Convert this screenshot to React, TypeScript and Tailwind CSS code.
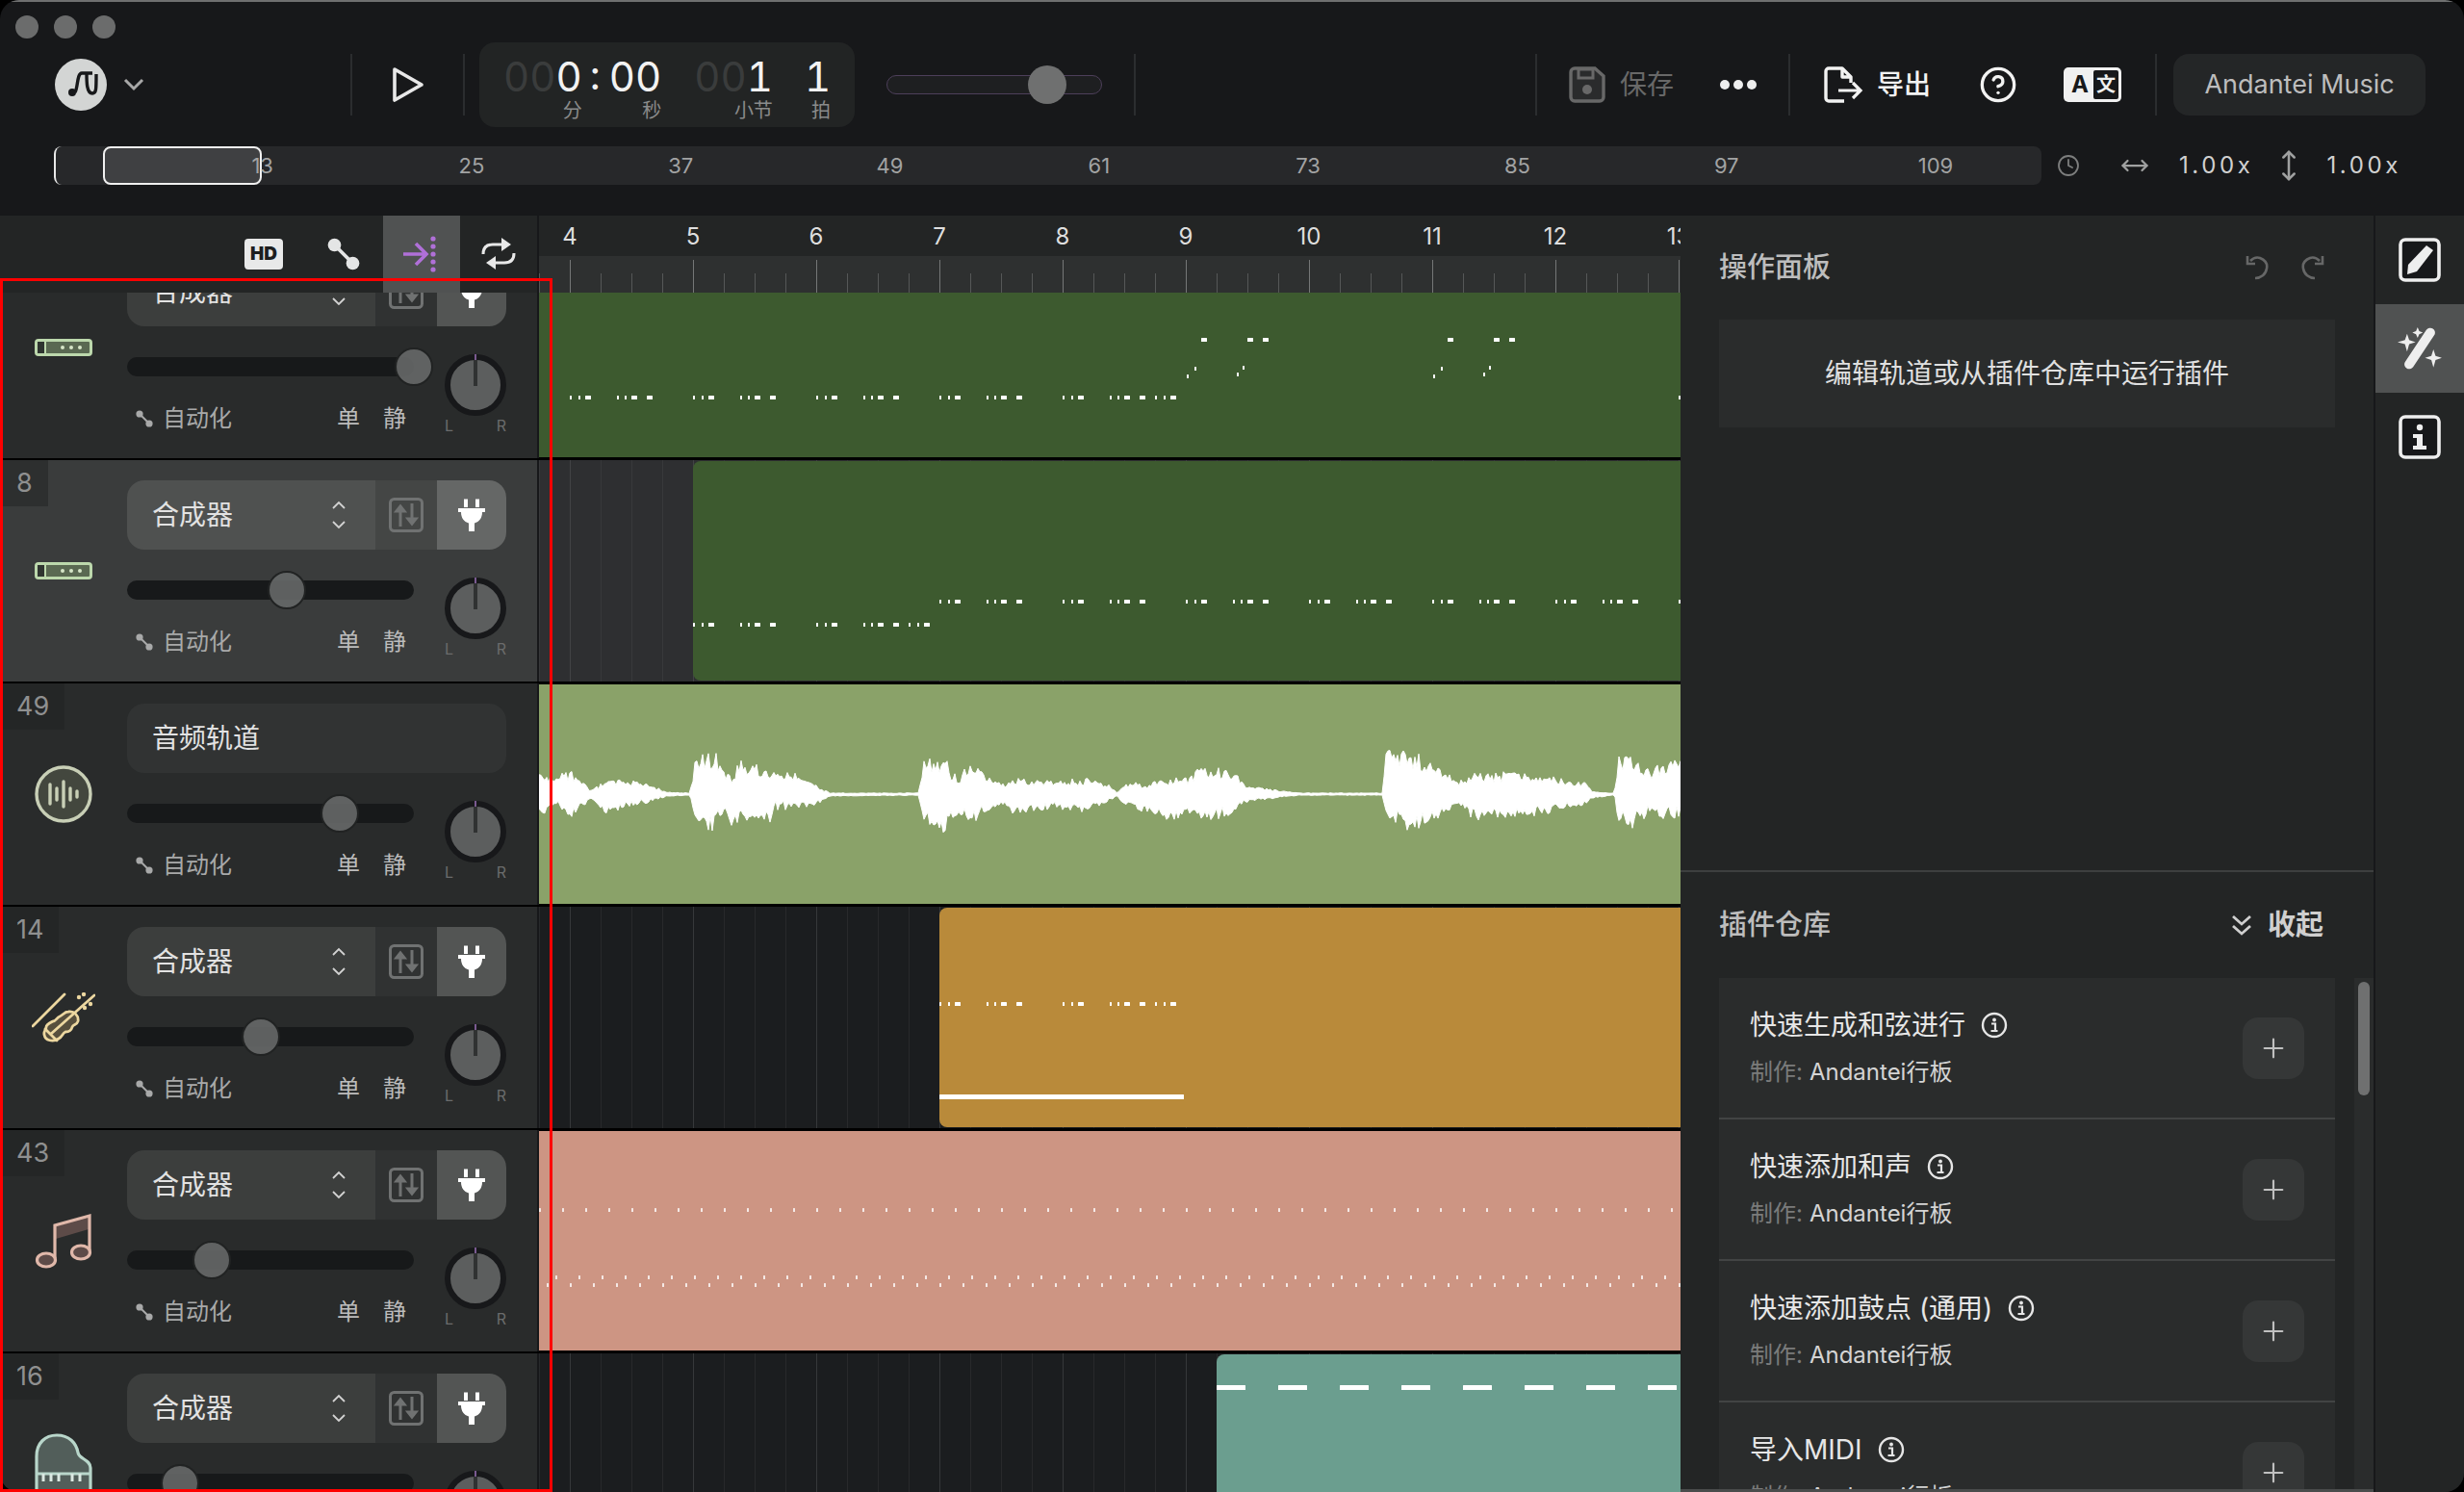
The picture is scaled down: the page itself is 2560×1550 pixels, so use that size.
import { CircleHelp, Clock, MoveHorizontal, MoveVertical, Plus } from "lucide-react";

type Rect = { x: number; y: number; w: number; h?: number };

// one bar of the repeating midi figure, x and y in timeline px
const bar = (x: number, y: number, extra = false): Rect[] => {
  const parts = [[0, 2], [9, 2], [16, 6], [49, 2], [57, 2], [64, 6], [80, 6]];
  if (extra) parts.push([96, 2], [105, 2], [112, 6]);
  return parts.map(([dx, w]) => ({ x: x + dx, y, w }));
};

const range = (n: number) => Array.from({ length: n }, (_, i) => i);

const TRACK7_NOTES: Rect[] = [
  ...bar(592, 411), ...bar(720, 411), ...bar(848, 411), ...bar(976, 411), ...bar(1104, 411, true),
  { x: 1233, y: 389, w: 2 }, { x: 1241, y: 381, w: 2 }, { x: 1248, y: 351, w: 6 },
  { x: 1285, y: 387, w: 2 }, { x: 1291, y: 380, w: 2 }, { x: 1296, y: 351, w: 6 }, { x: 1312, y: 351, w: 6 },
  { x: 1489, y: 389, w: 2 }, { x: 1497, y: 381, w: 2 }, { x: 1504, y: 351, w: 6 },
  { x: 1541, y: 387, w: 2 }, { x: 1547, y: 380, w: 2 }, { x: 1552, y: 351, w: 6 }, { x: 1568, y: 351, w: 6 },
  { x: 1744, y: 411, w: 2 },
];

const TRACK8_NOTES: Rect[] = [
  ...bar(720, 647), ...bar(848, 647, true),
  ...[976, 1104, 1232, 1360, 1488, 1616, 1744].flatMap((x) => bar(x, 623)),
];

const TRACK14_NOTES: Rect[] = [
  ...bar(976, 1041), ...bar(1104, 1041, true),
  { x: 976, y: 1137, w: 254, h: 5 },
];

const TRACK43_NOTES: Rect[] = range(50).flatMap((i) => [
  { x: 560 + i * 24, y: 1255, w: 2 },
  { x: 577 + i * 24, y: 1325, w: 2 },
  { x: 568 + i * 24, y: 1333, w: 2 },
]);

const TRACK16_NOTES: Rect[] = range(8).map((i) => ({ x: 1264 + i * 64, y: 1439, w: 30, h: 5 }));

// waveform envelope, read off the picture: x, top, bottom
const ENVELOPE = [
  [0, 330, 430], [20, 325, 405], [45, 315, 430], [70, 365, 390], [90, 345, 430], [120, 338, 405], [150, 352, 395],
  [175, 370, 380], [205, 372, 378], [212, 290, 435], [235, 262, 475], [250, 300, 420], [262, 340, 460], [272, 280, 445],
  [315, 320, 445], [320, 310, 410], [345, 320, 410], [375, 350, 405], [395, 372, 380], [515, 372, 378], [522, 290, 440],
  [550, 285, 475], [570, 340, 420], [585, 290, 450], [610, 325, 415], [630, 350, 400], [645, 330, 425], [700, 345, 410],
  [740, 335, 420], [775, 350, 390], [785, 372, 380], [795, 350, 405], [830, 345, 425], [860, 330, 445], [880, 335, 420],
  [900, 300, 440], [940, 315, 430], [960, 350, 395], [1000, 365, 385], [1030, 372, 378], [1145, 372, 378], [1150, 262, 445],
  [1185, 265, 465], [1210, 295, 440], [1250, 340, 405], [1270, 322, 440], [1340, 320, 435], [1420, 345, 400], [1430, 368, 385],
  [1460, 372, 378], [1465, 280, 440], [1480, 275, 460], [1510, 320, 420], [1525, 290, 430], [1550, 290, 430],
];

const jitter = (n: number) => {
  const s = Math.sin(n * 12.9898) * 43758.5453;
  return s - Math.floor(s) - 0.5;
};

function wavePath() {
  const top: string[] = [];
  const bottom: string[] = [];
  for (let x = 0; x <= 1186; x += 2) {
    const z = x * 1.3067;
    let i = 0;
    while (i < ENVELOPE.length - 2 && ENVELOPE[i + 1][0] < z) i++;
    const [x0, t0, b0] = ENVELOPE[i];
    const [x1, t1, b1] = ENVELOPE[i + 1];
    const f = Math.min(1, (z - x0) / (x1 - x0));
    const t = (t0 + (t1 - t0) * f) / 3 - 11;
    const b = (b0 + (b1 - b0) * f) / 3 - 11;
    const amp = (b - t) / 3.2;
    top.push(`${x},${(t + jitter(x) * amp).toFixed(1)}`);
    bottom.unshift(`${x},${(b + jitter(x + 7) * amp).toFixed(1)}`);
  }
  return `M${top.join("L")}L${bottom.join("L")}Z`;
}

/* ── small drawn icons ── */

const Logo = () => (
  <svg width="54" height="54" viewBox="0 0 54 54">
    <circle cx="27" cy="27" r="27" fill="#d3d5d4" />
    <circle cx="18" cy="35" r="4" fill="#17181a" />
    <path d="M21 35C24 30 23 15 28 15H39M33 15C33 24 33 36 39 36C43 36 43 32 43 16" fill="none" stroke="#17181a" strokeWidth="3.4" />
  </svg>
);

const PlayIcon = () => (
  <svg width="34" height="38" viewBox="0 0 34 38">
    <path d="M3 3L31 19L3 35Z" fill="none" stroke="#e8e8e8" strokeWidth="3.6" strokeLinejoin="round" />
  </svg>
);

const SaveIcon = () => (
  <svg width="38" height="38" viewBox="0 0 38 38">
    <path d="M6 2H27L36 10V32A4 4 0 0 1 32 36H6A4 4 0 0 1 2 32V6A4 4 0 0 1 6 2Z" fill="#2a2b2c" stroke="#686868" strokeWidth="3.4" />
    <path d="M10 3H25V12H10Z" fill="none" stroke="#686868" strokeWidth="3" />
    <circle cx="19" cy="24" r="5" fill="#686868" />
  </svg>
);

const ExportIcon = () => (
  <svg width="42" height="38" viewBox="0 0 42 38">
    <path d="M22 36H6A3 3 0 0 1 3 33V5A3 3 0 0 1 6 2H20L29 11V17M20 2V11H29" fill="none" stroke="#f2f2f2" strokeWidth="3.4" strokeLinejoin="round" />
    <path d="M16 25H39M31 17L39 25L31 33" fill="none" stroke="#f2f2f2" strokeWidth="3.2" />
  </svg>
);

const NodeIcon = ({ size, color }: { size: number; color: string }) => (
  <svg width={size} height={size} viewBox="0 0 36 36">
    <path d="M9 9L27 27" stroke={color} strokeWidth="3.5" />
    <circle cx="9" cy="9" r="6.5" fill={color} />
    <circle cx="27" cy="27" r="6.5" fill={color} />
  </svg>
);

const SnapIcon = () => (
  <svg width="42" height="38" viewBox="0 0 42 38">
    <path d="M2 19H25M15 8L26 19L15 30" fill="none" stroke="#b070d8" strokeWidth="3.6" />
    {[3, 11, 19, 27, 35].map((y) => <circle key={y} cx="33" cy={y} r="2.6" fill="#b070d8" />)}
  </svg>
);

const LoopIcon = () => (
  <svg width="36" height="36" viewBox="0 0 36 36">
    <path d="M2 18C2 11 6 8 12 8H24M34 17C34 24 30 27 24 27H12" fill="none" stroke="#e8e8e8" strokeWidth="3" />
    <path d="M21 1L31 8L21 15Z" fill="#e8e8e8" />
    <path d="M15 20L5 27L15 34Z" fill="#e8e8e8" />
  </svg>
);

const UpDown = () => (
  <svg width="14" height="30" viewBox="0 0 14 30">
    <path d="M1 8L7 2L13 8M1 22L7 28L13 22" fill="none" stroke="#d2d2d2" strokeWidth="1.8" />
  </svg>
);

const DoubleDown = () => (
  <svg width="22" height="22" viewBox="0 0 22 22">
    <path d="M2 2L11 10L20 2M2 12L11 20L20 12" fill="none" stroke="#cfcfcf" strokeWidth="2.8" />
  </svg>
);

const MixerIcon = () => (
  <svg width="36" height="36" viewBox="0 0 36 36">
    <rect x="1.5" y="1.5" width="33" height="33" rx="4" fill="none" stroke="#707272" strokeWidth="3" />
    <path d="M12 30V10M8 14L12 9L16 14Z M24 6V26M20 22L24 27L28 22Z" fill="#707272" stroke="#707272" strokeWidth="3" />
  </svg>
);

const PlugIcon = () => (
  <svg width="28" height="36" viewBox="0 0 28 36">
    <path d="M6 1.5H10V10H6ZM18 1.5H22V10H18Z" fill="#fff" />
    <path d="M0 11H28V15H25C25 21 22 25 17 26.5V35H11V26.5C6 25 3 21 3 15H0Z" fill="#fff" />
  </svg>
);

const FluteIcon = () => (
  <svg width="60" height="18" viewBox="0 0 60 18">
    <rect x="1.5" y="1.5" width="57" height="15" rx="2.5" fill="#5a6952" stroke="#bcd8ac" strokeWidth="3" />
    <rect x="3" y="3" width="8" height="12" fill="#2f3530" />
    <path d="M11 2V16" stroke="#bcd8ac" strokeWidth="2" />
    {[29, 38, 47].map((x) => <circle key={x} cx={x} cy="9" r="2" fill="#d6e6c8" />)}
  </svg>
);

const AudioIcon = () => (
  <svg width="60" height="60" viewBox="0 0 60 60">
    <circle cx="30" cy="30" r="28" fill="#43473e" stroke="#c8cfb6" strokeWidth="3.4" />
    {[[16, 10], [23, 6], [30, 13], [37, 6], [44, 3]].map(([x, h]) => (
      <path key={x} d={`M${x} ${30 - h}V${30 + h}`} stroke="#c8cfb6" strokeWidth="3.4" strokeLinecap="round" />
    ))}
  </svg>
);

const ViolinIcon = () => (
  <svg width="66" height="52" viewBox="0 0 66 52">
    <path d="M1 35L34 2" stroke="#ecd7a0" strokeWidth="2.8" strokeLinecap="round" />
    <path d="M38 20C44 19 49 24 48 30C47 34 43 33 42 36C41 40 38 41 35 41C32 42 32 46 28 48C22 52 14 50 13 44C12 40 15 39 15 36C15 33 20 31 22 30C25 30 26 26 29 25C32 24 34 20 38 20Z" fill="#574f3d" stroke="#ecd7a0" strokeWidth="2.8" />
    <path d="M20 43L65 3M14 38L26 50" fill="none" stroke="#ecd7a0" strokeWidth="2.8" strokeLinecap="round" />
    {[[49, 5], [54, 2], [61, 12], [55, 16]].map(([x, y]) => <circle key={x} cx={x} cy={y} r="2.2" fill="#ecd7a0" />)}
  </svg>
);

const NoteIcon = () => (
  <svg width="60" height="58" viewBox="0 0 60 58">
    <path d="M22 14L56 4V17L22 27Z" fill="#5d4b48" />
    <path d="M21 47V13L57 3V39" fill="none" stroke="#e0b8aa" strokeWidth="3.2" />
    <ellipse cx="12" cy="49" rx="9.5" ry="7" fill="#5d4b48" stroke="#e0b8aa" strokeWidth="3.2" />
    <ellipse cx="48" cy="41" rx="9.5" ry="7" fill="#5d4b48" stroke="#e0b8aa" strokeWidth="3.2" />
  </svg>
);

const PianoIcon = () => (
  <svg width="60" height="64" viewBox="0 0 60 64" className="overflow-visible">
    <path d="M2 62V24C2 10 11 2 23 2C36 2 43 10 45 20C46 27 58 27 58 36V62Z" fill="#525e5a" stroke="#b8d6ca" strokeWidth="3.2" />
    <path d="M2 42H58" stroke="#b8d6ca" strokeWidth="3" />
    {[9, 17, 25, 39, 47].map((x) => <path key={x} d={`M${x} 42V50`} stroke="#dbe8e2" strokeWidth="3" />)}
  </svg>
);

const InfoDot = () => (
  <svg width="28" height="28" viewBox="0 0 28 28" className="shrink-0">
    <circle cx="14" cy="14" r="12" fill="none" stroke="#e6e6e6" strokeWidth="2.4" />
    <circle cx="14" cy="8.5" r="1.9" fill="#e6e6e6" />
    <path d="M11 12.5H15V19M10.5 20H17.5" fill="none" stroke="#e6e6e6" strokeWidth="2.2" />
  </svg>
);

const UndoIcon = ({ flip = false }: { flip?: boolean }) => (
  <svg width="26" height="26" viewBox="0 0 26 26" className={flip ? "-scale-x-100" : ""}>
    <path d="M6 6C9 3 13 2 16 3C21 5 24 9 23 14C22 20 17 24 11 24" fill="none" stroke="#666767" strokeWidth="2.6" />
    <path d="M3 1V9H11" fill="none" stroke="#666767" strokeWidth="2.6" />
  </svg>
);

const PencilTab = () => (
  <svg width="44" height="46" viewBox="0 0 44 46">
    <rect x="2" y="2" width="40" height="42" rx="5" fill="#17181a" stroke="#eeeeee" strokeWidth="3.6" />
    <path d="M29 8L36 13L19 35L9 38L10 28Z" fill="#eeeeee" />
  </svg>
);

const WandTab = () => (
  <svg width="46" height="44" viewBox="0 0 42 40">
    <path d="M31 5L11 35" stroke="#eeeeee" strokeWidth="9" strokeLinecap="round" />
    <path d="M9 6L11 12L17 14L11 16L9 23L7 16L0 14L7 12Z M19 0L20.5 3.5L24 5L20.5 6.5L19 10L17.5 6.5L14 5L17.5 3.5Z M34 21L36 27L42 29L36 31L34 38L32 31L26 29L32 27Z" fill="#eeeeee" />
  </svg>
);

const InfoTab = () => (
  <svg width="44" height="46" viewBox="0 0 44 46">
    <rect x="2" y="2" width="40" height="42" rx="5" fill="#17181a" stroke="#eeeeee" strokeWidth="3.6" />
    <circle cx="22" cy="13" r="3.2" fill="#eeeeee" />
    <path d="M15 20H25V32H29V36H15V32H19V24H15Z" fill="#eeeeee" />
  </svg>
);

/* ── tracks ── */

const ICONS = {
  flute: <FluteIcon />,
  audio: <AudioIcon />,
  violin: <ViolinIcon />,
  note: <NoteIcon />,
  piano: <PianoIcon />,
};

type Track = {
  id: string;
  y: number;
  thumb: number;
  icon: keyof typeof ICONS;
  audio?: boolean;
  selected?: boolean;
  clipX: number;
  clipClass: string;
  notes?: Rect[];
  noteClass?: string;
};

const TRACKS: Track[] = [
  { id: "", y: 246, thumb: 430, icon: "flute", clipX: 560, clipClass: "bg-[#3d5a2f]", notes: TRACK7_NOTES },
  { id: "8", y: 478, thumb: 298, icon: "flute", selected: true, clipX: 720, clipClass: "bg-[#3d5a2f]", notes: TRACK8_NOTES },
  { id: "49", y: 710, thumb: 353, icon: "audio", audio: true, clipX: 560, clipClass: "bg-[#8aa269]" },
  { id: "14", y: 942, thumb: 271, icon: "violin", clipX: 976, clipClass: "bg-[#b98a3a]", notes: TRACK14_NOTES },
  { id: "43", y: 1174, thumb: 220, icon: "note", clipX: 560, clipClass: "bg-[#cd9583]", notes: TRACK43_NOTES, noteClass: "opacity-80" },
  { id: "16", y: 1406, thumb: 187, icon: "piano", clipX: 1264, clipClass: "bg-[#6b9e8f]", notes: TRACK16_NOTES },
];

function TrackHead({ t }: { t: Track }) {
  return (
    <div className={`w-[560px] shrink-0 flex border-r-2 border-[#17181a] ${t.selected ? "bg-[#3a3c3c]" : "bg-[#292b2b]"}`}>
      <div className="w-[132px] shrink-0 flex flex-col">
        <div className={`h-[48px] self-start pl-[17px] pr-[16px] flex items-center text-[27px] text-[#8f9090] ${t.id ? "" : "invisible"} ${t.selected ? "bg-[#2d2f2f]" : "bg-[#242626]"}`}>
          {t.id || "0"}
        </div>
        <div className="mt-[37px] h-[60px] flex items-center justify-center">{ICONS[t.icon]}</div>
      </div>

      <div className="w-[394px] shrink-0 pt-[21px]">
        {t.audio ? (
          <div className="h-[72px] rounded-[18px] bg-[#313333] pl-[26px] flex items-center text-[28px] text-[#e2e2e2]">音频轨道</div>
        ) : (
          <div className="h-[72px] rounded-[18px] overflow-hidden flex text-[28px] text-[#e2e2e2]">
            <div className={`w-[258px] pl-[26px] pr-[31px] flex items-center justify-between ${t.selected ? "bg-[#4f5150]" : "bg-[#3c3e3d]"}`}>
              合成器
              <UpDown />
            </div>
            <div className={`w-[64px] flex items-center justify-center ${t.selected ? "bg-[#444645]" : "bg-[#303232]"}`}>
              <MixerIcon />
            </div>
            <div className={`flex-1 flex items-center justify-center ${t.selected ? "bg-[#656766]" : "bg-[#535554]"}`}>
              <PlugIcon />
            </div>
          </div>
        )}

        <div className="flex justify-between">
          <div className="w-[298px]">
            <div className="relative mt-[32px] h-[20px] rounded-full bg-[#17191a]">
              <div
                className="absolute top-[-10px] w-[40px] h-[40px] rounded-full bg-[#666868]/90 border-2 border-[#212323]"
                style={{ left: t.thumb - 132 - 20 }}
              />
            </div>
            <div className="mt-[28px] h-[32px] pl-[8px] pr-[8px] flex items-center text-[24px] text-[#a8a9a9]">
              <NodeIcon size={20} color="#a8a9a9" />
              <span className="ml-[9px]">自动化</span>
              <span className="ml-auto text-[#bcbcbc]">单</span>
              <span className="ml-[24px] text-[#bcbcbc]">静</span>
            </div>
          </div>
          <div className="w-[64px] mt-[29px]">
            <div className="relative w-[64px] h-[64px] rounded-full border-[6px] border-[#17181a] bg-[#5c5e5e]">
              <div className="absolute left-[24px] top-0 w-[4px] h-[27px] bg-[#303232]" />
              <div className="absolute left-[25px] top-[-6px] w-[2px] h-[6px] bg-[#7a5a90]" />
            </div>
            <div className="mt-[1px] flex justify-between text-[16px] leading-[18px] text-[#6a6b6b]">
              <span>L</span>
              <span>R</span>
            </div>
          </div>
        </div>
      </div>
    </div>
  );
}

function TrackLane({ t }: { t: Track }) {
  const full = t.clipX === 560;
  const lane = full
    ? "bg-black"
    : t.selected
      ? "bg-[#2e2f31] bg-[linear-gradient(90deg,#424345_1px,transparent_1px),linear-gradient(90deg,#38393b_1px,transparent_1px)]"
      : "bg-[#1b1d1f] bg-[linear-gradient(90deg,#36383a_1px,transparent_1px),linear-gradient(90deg,#28292b_1px,transparent_1px)]";
  return (
    <div className={`flex-1 flex py-px bg-size-[128px_100%,32px_100%] bg-position-[32px_0,0_0] ${lane}`}>
      {!full && <div className="shrink-0" style={{ width: t.clipX - 560 }} />}
      <div className={`flex-1 overflow-hidden ${full ? "" : "rounded-l-lg"} ${t.clipClass}`}>
        <svg className="block w-full h-full">
          <g transform={`translate(${560 - t.clipX},0)`}>
            {t.audio && <path d={wavePath()} fill="#ffffff" stroke="#ffffff" strokeWidth="1" />}
            <g transform={`translate(-560,${-(t.y + 1)})`} className={t.noteClass}>
              {t.notes?.map((n, i) => (
                <rect key={i} x={n.x} y={n.y} width={n.w} height={n.h ?? 4} rx="0.5" fill="#ffffff" />
              ))}
            </g>
          </g>
        </svg>
      </div>
    </div>
  );
}

const Divider = ({ className = "" }: { className?: string }) => <div className={`w-[2px] h-[64px] bg-[#2b2d2f] shrink-0 ${className}`} />;

const TimeGroup = ({ dim, lit, label }: { dim: string; lit: string; label: string }) => (
  <div className="flex flex-col items-end">
    <div className="text-[42px] leading-[42px] tabular-nums">
      <span className="text-[#3a3c3c]">{dim}</span>
      <span className="text-[#f2f2f2]">{lit}</span>
    </div>
    <div className="mt-[2px] text-[20px] leading-[24px] text-[#8a8b8b]">{label}</div>
  </div>
);

const PLUGINS = ["快速生成和弦进行", "快速添加和声", "快速添加鼓点 (通用)", "导入MIDI"];

export default function App() {
  return (
    <div className="relative w-full h-[1550px] overflow-hidden bg-black [font-family:Inter,'Noto_Sans_CJK_SC',sans-serif]">
      <div className="h-full rounded-[20px] overflow-hidden flex flex-col bg-[#17181a]">

        {/* Title bar */}
        <div className="h-[56px] shrink-0 border-t-2 border-[#6f7070] pl-[16px] pt-[14px] flex gap-[16px]">
          {range(3).map((i) => <div key={i} className="w-[24px] h-[24px] rounded-full bg-[#6b6c6c]" />)}
        </div>

        {/* Transport row */}
        <div className="h-[64px] shrink-0 flex items-center">
          <div className="w-[364px] shrink-0 pl-[57px] flex items-center gap-[17px]">
            <Logo />
            <svg width="22" height="14" viewBox="0 0 22 14">
              <path d="M2 2L11 11L20 2" fill="none" stroke="#a8a8a8" strokeWidth="3" />
            </svg>
          </div>
          <Divider />
          <div className="w-[115px] shrink-0 flex justify-center"><PlayIcon /></div>
          <Divider />
          <div className="ml-[15px] w-[390px] h-[88px] shrink-0 rounded-[16px] bg-[#222424] pl-[25px] pt-[15px] flex items-start">
            <TimeGroup dim="00" lit="0" label="分" />
            <div className="ml-[7px] w-[13px] text-[42px] leading-[38px] text-[#f2f2f2] text-center">:</div>
            <div className="ml-[8px]"><TimeGroup dim="" lit="00" label="秒" /></div>
            <div className="ml-[34px]"><TimeGroup dim="00" lit="1" label="小节" /></div>
            <div className="ml-[33px]"><TimeGroup dim="" lit="1" label="拍" /></div>
          </div>
          <div className="relative ml-[33px] w-[224px] h-[20px] shrink-0 rounded-full bg-[#1e1f21] border border-[#4d3f5a]">
            <div className="absolute left-[146px] top-[-11px] w-[40px] h-[40px] rounded-full bg-[#6f7070]" />
          </div>
          <Divider className="ml-[33px]" />
          <div className="flex-1" />
          <Divider />
          <div className="ml-[33px] flex items-center gap-[15px] text-[28px] text-[#686868]">
            <SaveIcon />
            保存
          </div>
          <div className="ml-[48px] w-[38px] flex justify-between">
            {range(3).map((i) => <div key={i} className="w-[10px] h-[10px] rounded-full bg-[#eeeeee]" />)}
          </div>
          <Divider className="ml-[33px]" />
          <div className="ml-[34px] flex items-center gap-[14px] text-[28px] font-medium text-[#f2f2f2]">
            <ExportIcon />
            导出
          </div>
          <CircleHelp size={40} strokeWidth={2} className="ml-[50px] text-[#f2f2f2]" />
          <div className="ml-[48px] w-[60px] h-[36px] rounded-[5px] bg-[#f0f0f0] flex items-center p-[3px] text-[#17181a]">
            <span className="w-[28px] text-center text-[24px] leading-none font-bold">A</span>
            <span className="flex-1 h-full rounded-[2px] bg-[#17181a] text-[#f0f0f0] text-center text-[20px] leading-[30px] font-bold">文</span>
          </div>
          <Divider className="ml-[35px]" />
          <div className="ml-[17px] mr-[40px] w-[262px] h-[64px] shrink-0 rounded-[16px] bg-[#242627] flex items-center justify-center text-[27px] text-[#bdbdbd]">
            Andantei Music
          </div>
        </div>

        {/* Overview strip */}
        <div className="mt-[32px] h-[40px] shrink-0 flex items-center">
          <div className="relative ml-[56px] w-[2065px] h-full rounded-lg bg-[#27282a] border-l-2 border-[#e8e8e8] pl-[106px] grid grid-cols-[repeat(9,217.3px)] items-center text-center text-[22px] text-[#a2a3a3]">
            <div className="absolute left-[49px] top-0 w-[165px] h-full rounded-lg border-2 border-[#f0f0f0] bg-[#3f4042]" />
            {[13, 25, 37, 49, 61, 73, 85, 97, 109].map((n) => <span key={n} className="relative">{n}</span>)}
          </div>
          <Clock size={24} strokeWidth={1.8} className="ml-[16px] text-[#7d7e7e]" />
          <MoveHorizontal size={30} strokeWidth={1.8} className="ml-[42px] text-[#a0a1a1]" />
          <span className="ml-[31px] text-[24px] tracking-[3.6px] text-[#d0d0d0]">1.00x</span>
          <MoveVertical size={34} strokeWidth={1.8} className="ml-[20px] text-[#a0a1a1]" />
          <span className="ml-[22px] text-[24px] tracking-[3.6px] text-[#d0d0d0]">1.00x</span>
        </div>

        {/* Workspace */}
        <div className="mt-[32px] flex-1 min-h-0 flex">
          <div className="w-[1746px] shrink-0 flex flex-col">
            <div className="h-[80px] shrink-0 flex">
              <div className="w-[560px] shrink-0 flex justify-end items-center border-r-2 border-[#17181a] bg-[#232525]">
                <div className="w-[40px] h-[32px] rounded-[4px] bg-[#e8e9e9] text-[#1d1e1f] text-[19px] font-black flex items-center justify-center">HD</div>
                <div className="ml-[44px]"><NodeIcon size={38} color="#e4e5e5" /></div>
                <div className="ml-[22px] w-[80px] h-full bg-[#505252] flex items-center justify-center"><SnapIcon /></div>
                <div className="ml-[22px] mr-[22px]"><LoopIcon /></div>
              </div>
              <div className="flex-1 min-w-0 overflow-hidden flex flex-col">
                <div className="h-[42px] shrink-0 bg-[#232525] flex -ml-[32px] pt-[8px] text-[24px] leading-[28px] text-[#dedede]">
                  {[4, 5, 6, 7, 8, 9, 10, 11, 12, 13].map((n) => (
                    <span key={n} className="w-[128px] shrink-0 text-center">{n}</span>
                  ))}
                </div>
                <div className="flex-1 bg-[#2e3030] flex items-end">
                  {range(38).map((i) => (
                    <div key={i} className="w-[32px] shrink-0">
                      <div className={i % 4 === 1 ? "w-px h-[34px] bg-[#757777]" : "w-px h-[20px] bg-[#555757]"} />
                    </div>
                  ))}
                </div>
              </div>
            </div>

            <div className="flex-1 min-h-0 overflow-hidden">
              <div className="-mt-[58px]">
                {TRACKS.map((t) => (
                  <div key={t.y} className="h-[232px] flex border-b-2 border-black">
                    <TrackHead t={t} />
                    <TrackLane t={t} />
                  </div>
                ))}
              </div>
            </div>
          </div>

          {/* Right panel */}
          <div className="flex-1 min-w-0 flex flex-col border-b-[3px] border-[#4a4c4c] bg-[#232525] overflow-hidden">
            <div className="h-[682px] shrink-0 border-b-2 border-[#3d3f3f]">
              <div className="h-[108px] pl-[40px] pr-[50px] flex items-center justify-between">
                <span className="text-[29px] font-medium text-[#bdbdbd]">操作面板</span>
                <div className="flex gap-[32px]">
                  <UndoIcon />
                  <UndoIcon flip />
                </div>
              </div>
              <div className="mx-[40px] h-[112px] bg-[#2a2c2c] flex items-center justify-center text-[28px] text-[#e0e0e0]">
                编辑轨道或从插件仓库中运行插件
              </div>
            </div>

            <div className="h-[110px] shrink-0 pl-[40px] pr-[52px] flex items-center justify-between">
              <span className="text-[29px] font-medium text-[#bdbdbd]">插件仓库</span>
              <div className="flex items-center gap-[16px] text-[29px] font-semibold text-[#cfcfcf]">
                <DoubleDown />
                收起
              </div>
            </div>

            <div className="flex-1 min-h-0 flex pl-[40px]">
              <div className="w-[640px] shrink-0 bg-[#2a2c2c]">
                {PLUGINS.map((name) => (
                  <div key={name} className="h-[147px] border-b-2 border-[#424444] pl-[32px] pr-[32px] flex items-center justify-between">
                    <div className="self-start pt-[29px]">
                      <div className="h-[40px] flex items-center gap-[16px] text-[28px] text-[#e6e6e6]">
                        {name}
                        <InfoDot />
                      </div>
                      <div className="mt-[13px] h-[32px] flex items-center text-[24px]">
                        <span className="text-[#7a7b7b]">制作:</span>
                        <span className="ml-[7px] text-[#d4d4d4]">Andantei行板</span>
                      </div>
                    </div>
                    <div className="w-[64px] h-[64px] rounded-[16px] bg-[#353737] flex items-center justify-center text-[#c0c0c0]">
                      <Plus size={32} strokeWidth={1.6} />
                    </div>
                  </div>
                ))}
              </div>
              <div className="ml-[20px] flex-1 bg-[#2a2c2c] pt-[4px] pl-[4px]">
                <div className="w-[12px] h-[118px] rounded-full bg-[#6f7070]" />
              </div>
            </div>
          </div>

          {/* Tabs */}
          <div className="w-[94px] shrink-0 border-l-2 border-[#17181a] bg-[#232525] flex flex-col">
            <div className="h-[92px] flex items-center justify-center"><PencilTab /></div>
            <div className="h-[92px] bg-[#505252] flex items-center justify-center"><WandTab /></div>
            <div className="h-[92px] flex items-center justify-center"><InfoTab /></div>
          </div>
        </div>
      </div>

      {/* Red annotation frame from the reference */}
      <div className="absolute left-0 top-[289px] w-[574px] h-[1261px] border-[3px] border-[#ff0000] pointer-events-none" />
    </div>
  );
}
